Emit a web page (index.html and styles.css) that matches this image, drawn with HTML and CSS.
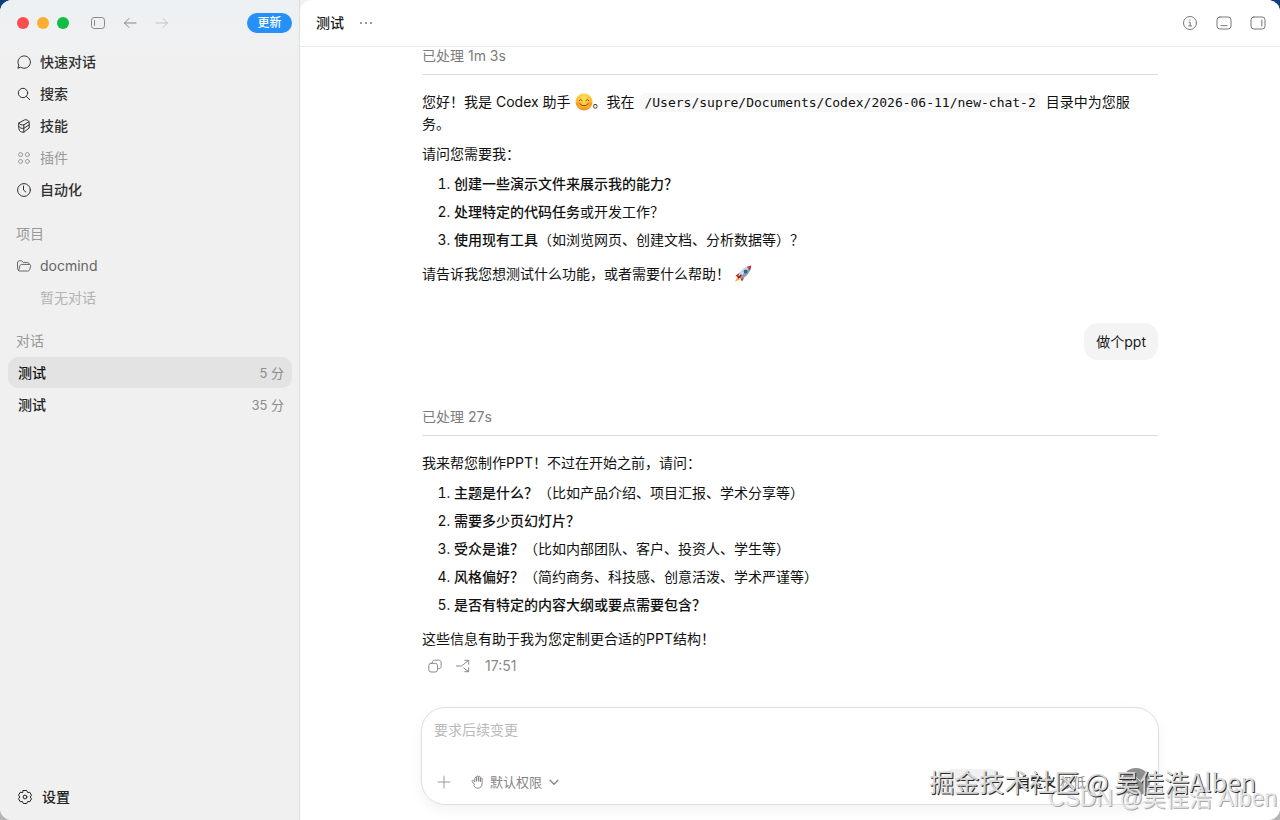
FILE: index.html
```html
<!DOCTYPE html>
<html lang="zh-CN">
<head>
<meta charset="utf-8">
<title>测试</title>
<link rel="stylesheet" href="styles.css">
</head>
<body>
<div class="window">
  <aside class="sidebar">
    <div class="titlebar">
      <span class="light red"></span><span class="light yellow"></span><span class="light green"></span>
      <button class="icon-btn" aria-label="切换侧栏"><svg class="icon" viewBox="0 0 16 16"><rect x="1.500" y="2.500" width="13" height="11" rx="2.800"/><path d="M4.500 5.500v5"/></svg></button>
      <button class="icon-btn" aria-label="后退"><svg class="icon" viewBox="0 0 16 16"><path d="M14 8H2.500M7 3.500L2.500 8 7 12.500"/></svg></button>
      <button class="icon-btn faint" aria-label="前进"><svg class="icon" viewBox="0 0 16 16"><path d="M2 8h11.500M9 3.500L13.500 8 9 12.500"/></svg></button>
      <button class="update">更新</button>
    </div>
    <nav class="nav">
      <a class="item" href="#"><svg class="icon" viewBox="0 0 16 16"><path d="M2 13.900l.8-2.700A6.200 6.200 0 1 1 4.900 13.400z"/></svg>快速对话</a>
      <a class="item" href="#"><svg class="icon" viewBox="0 0 16 16"><circle cx="7" cy="7" r="4.700"/><path d="M10.500 10.500l3.200 3.200"/></svg>搜索</a>
      <a class="item" href="#"><svg class="icon" viewBox="0 0 16 16"><path d="M2.900 5L8.500 1.900c2.700-.6 4.500.7 4.700 2.900v5.200L7.800 14.200c-2.800.2-4.700-1-4.900-3.200zM2.900 5c1 1.700 2.700 2.300 4.900 1.900l5.200-3.300M7.800 6.900v7.200M2.900 8.500c1 1.600 2.700 2.200 4.900 1.800l5.400-3.500"/></svg>技能</a>
      <a class="item muted" href="#"><svg class="icon" viewBox="0 0 16 16"><circle cx="4.600" cy="4.600" r="2"/><circle cx="11.400" cy="4.600" r="2"/><circle cx="4.600" cy="11.400" r="2"/><circle cx="11.400" cy="11.400" r="2"/></svg>插件</a>
      <a class="item" href="#"><svg class="icon" viewBox="0 0 16 16"><circle cx="8" cy="8" r="6.400"/><path d="M7.500 4v4l2.300 2"/></svg>自动化</a>
    </nav>
    <section class="group">
      <h2 class="group-title">项目</h2>
      <a class="item project" href="#"><svg class="icon" viewBox="0 0 16 16"><path d="M2.500 12.500C1.800 12 1.500 11 1.500 10V5c0-1.500.8-2.200 2-2.200h2l1.800 1.600h4c1.200 0 1.900.7 1.900 2M2.700 12.500L3.800 8c.3-1 .9-1.600 2-1.600h7.400c1.200 0 1.700.7 1.400 1.800l-.8 3c-.3 1.200-1 1.800-2.200 1.800H3.800c-.5 0-.9-.2-1.200-.5z"/></svg>docmind</a>
      <p class="empty">暂无对话</p>
    </section>
    <section class="group">
      <h2 class="group-title">对话</h2>
      <a class="chat active" href="#"><span>测试</span><time>5 分</time></a>
      <a class="chat" href="#"><span>测试</span><time>35 分</time></a>
    </section>
    <a class="item settings" href="#"><svg class="icon" viewBox="0 0 16 16"><path d="M6.300 1.500h3.400l.9 2 2.200-.2 1.700 2.900L13.200 8l1.300 1.800-1.700 2.900-2.200-.2-.9 2H6.300l-.9-2-2.200.2-1.700-2.900L2.800 8 1.500 6.200l1.700-2.900 2.200.2z"/><circle cx="8" cy="8" r="1.900"/></svg>设置</a>
  </aside>

  <main class="main">
    <header class="header">
      <h1 class="title">测试</h1>
      <button class="icon-btn" aria-label="更多"><svg class="icon dots" viewBox="0 0 16 16"><circle cx="3" cy="8" r="1"/><circle cx="8" cy="8" r="1"/><circle cx="13" cy="8" r="1"/></svg></button>
      <div class="tools">
        <button class="icon-btn" aria-label="信息"><svg class="icon" viewBox="0 0 16 16"><circle cx="8" cy="8" r="6.500"/><path d="M7 7.200h1.200v3.600M6.800 10.900h2.800M8 4.700v.5"/></svg></button>
        <button class="icon-btn" aria-label="底部面板"><svg class="icon" viewBox="0 0 16 16"><rect x="1" y="2" width="14" height="12" rx="2.800"/><path d="M5 10.700h6"/></svg></button>
        <button class="icon-btn" aria-label="右侧面板"><svg class="icon" viewBox="0 0 16 16"><rect x="1" y="2" width="14" height="12" rx="2.800"/><path d="M11.800 5v6"/></svg></button>
      </div>
    </header>

    <div class="thread">
      <article class="reply">
        <div class="status">已处理 1m 3s</div>
        <p>您好！我是 Codex 助手 <svg class="emoji" viewBox="0 0 18 18" role="img" aria-label="微笑"><defs><radialGradient id="face" cx=".5" cy=".3" r=".75"><stop offset="0" stop-color="#ffe45c"/><stop offset=".6" stop-color="#fdbd2c"/><stop offset="1" stop-color="#ee7b1a"/></radialGradient></defs><circle cx="9" cy="9" r="8.500" fill="url(#face)"/><circle cx="3.800" cy="10.500" r="2" fill="#f7803c" opacity=".6"/><circle cx="14.200" cy="10.500" r="2" fill="#f7803c" opacity=".6"/><path d="M4.200 7.600q1.500-2.600 3 0M10.800 7.600q1.500-2.600 3 0M5 11q4 4 8 0" fill="none" stroke="#8a4a12" stroke-width="1" stroke-linecap="round"/></svg>。我在 <code>/Users/supre/Documents/Codex/2026-06-11/new-chat-2</code> 目录中为您服<br>务。</p>
        <p>请问您需要我：</p>
        <ol>
          <li><strong>创建一些演示文件</strong><b class="semi">来展示我的能力？</b></li>
          <li><strong>处理特定的代码任务</strong>或开发工作？</li>
          <li><strong>使用现有工具</strong>（如浏览网页、创建文档、分析数据等）？</li>
        </ol>
        <p>请告诉我您想测试什么功能，或者需要什么帮助！ <svg class="emoji" viewBox="0 0 18 18" role="img" aria-label="火箭"><path d="M3.500 12L.8 16.800 6 14.500z" fill="#f9b52b"/><path d="M1.500 10.800l5.500-4 4 4-3 6-1.500-3.500L3.500 12z" fill="#d4252f"/><path d="M4.500 10.500Q8 2 17.300.5 16.500 9.500 8 14z" fill="#8d9dac"/><path d="M4.500 10.500Q8 2 17.300.5L6.500 12z" fill="#d0dae2"/><path d="M12.800 2Q15 1 17.300.5 17 3 16 5.300z" fill="#c8323b"/><circle cx="11.500" cy="6.500" r="1.900" fill="#27699d"/><path d="M4 13.300l3.500-3.500" stroke="#7b1620" stroke-width="1.400"/></svg></p>
      </article>

      <div class="bubble">做个ppt</div>

      <article class="reply">
        <div class="status">已处理 27s</div>
        <p>我来帮您制作PPT！不过在开始之前，请问：</p>
        <ol>
          <li><strong>主题是什么？</strong>（比如产品介绍、项目汇报、学术分享等）</li>
          <li><strong>需要多少页幻灯片？</strong></li>
          <li><strong>受众是谁？</strong>（比如内部团队、客户、投资人、学生等）</li>
          <li><strong>风格偏好？</strong>（简约商务、科技感、创意活泼、学术严谨等）</li>
          <li><strong>是否有特定的内容大纲或要点需要包含？</strong></li>
        </ol>
        <p>这些信息有助于我为您定制更合适的PPT结构！</p>
        <div class="actions">
          <button class="icon-btn" aria-label="复制"><svg class="icon" viewBox="0 0 16 16"><rect x="1.800" y="5.300" width="8.700" height="8.700" rx="2.300"/><path d="M5.300 5.200V4.500c0-1.400.8-2.300 2.200-2.300h4.300c1.400 0 2.300.9 2.300 2.300v4c0 1.400-.9 2.200-2.300 2.200h-1.200"/></svg></button>
          <button class="icon-btn" aria-label="分支"><svg class="icon" viewBox="0 0 16 16"><path d="M1.500 8h5L13.500 2.500M9.800 2.300h3.900v3.900M8.700 10l4.800 3.600M13.700 9.800v3.900H9.800"/></svg></button>
          <time>17:51</time>
        </div>
      </article>
    </div>

    <form class="composer">
      <textarea rows="1" aria-label="消息" placeholder="要求后续变更"></textarea>
      <div class="controls">
        <button type="button" class="icon-btn" aria-label="添加"><svg class="icon" viewBox="0 0 16 16"><path d="M8 2v12M2 8h12"/></svg></button>
        <button type="button" class="access"><svg class="icon hand" viewBox="0 0 14 14"><path d="M3 9L1.200 6.600C.5 5.500 1.800 4.700 2.600 5.600L3.800 7V3.200c0-1.200 1.700-1.200 1.700 0V6.300 2c0-1.300 1.900-1.300 1.900 0v4.300V2.200c0-1.300 1.900-1.300 1.900 0v4.600V3.800c0-1.200 1.800-1.200 1.800 0v4.500c0 3-1.700 4.900-4.300 4.900-1.900 0-2.900-.9-3.700-2.400z"/></svg>默认权限<svg class="icon chev" viewBox="0 0 16 16"><path d="M3.500 6L8 10.500 12.500 6"/></svg></button>
        <span class="chip"></span>
        <button type="button" class="model"><strong>自定义</strong> 极低</button>
        <button type="button" class="send" aria-label="发送"><svg class="icon" viewBox="0 0 16 16"><path d="M8 13V3M4 7l4-4 4 4"/></svg></button>
      </div>
    </form>
  </main>
  <div class="mark csdn">CSDN @吴佳浩 Alben</div>
  <div class="mark juejin">掘金技术社区 @ 吴佳浩Alben</div>
</div>
</body>
</html>
```
FILE: styles.css
```css
* { box-sizing: border-box; }
body {
  margin: 0;
  background: linear-gradient(#0d3f80 50%, #b5b5b5 50%);
  font: 14px/22px Inter, "Noto Sans CJK SC", sans-serif;
  color: #1a1a1a;
  text-spacing-trim: space-all;
}
button, textarea { font: inherit; color: inherit; border: 0; background: none; padding: 0; margin: 0; }
a { color: inherit; text-decoration: none; }
h1, h2, p, ol { margin: 0; font: inherit; }
.icon { width: 16px; height: 16px; flex: none; display: block; fill: none; stroke: currentColor; stroke-width: 1; stroke-linecap: round; stroke-linejoin: round; }
.icon-btn { display: flex; color: #777; }

.window { position: relative; display: flex; height: 100vh; border-radius: 12px; overflow: hidden; background: #f0f0f0; }
.sidebar { flex: 0 0 300px; display: flex; flex-direction: column; padding: 0 7px 7px 8px; border-right: 1px solid #dedede; background: linear-gradient(#edf1f3, #f0f0f0 60px); }
.titlebar { display: flex; align-items: center; height: 46px; padding-left: 9px; gap: 8px; }
.light { width: 12px; height: 12px; border-radius: 50%; }
.red { background: #fe4c4f; }
.yellow { background: #fcaf2f; }
.green { background: #10bd45; }
.titlebar .icon-btn { margin-left: 8px; color: #888; }
.titlebar .green + .icon-btn { margin-left: 13px; }
.titlebar .faint { color: #c4c4c4; }
.update { margin-left: auto; width: 45px; height: 20px; border-radius: 10px; background: #2490f8; color: #fff; font-size: 12px; line-height: 20px; font-weight: 500; }

.item { display: flex; align-items: center; height: 32px; padding-left: 8px; gap: 8px; font-weight: 500; color: #303030; }
.muted { color: #999; font-weight: 400; }
.project { color: #666; font-weight: 400; }
.group { margin-top: 12px; }
.group + .group { margin-top: 11px; }
.group-title { padding-left: 8px; line-height: 32px; color: #999; }
.empty { padding-left: 32px; line-height: 32px; color: #b3b3b3; }
.chat { display: flex; justify-content: space-between; align-items: center; height: 31px; margin-bottom: 1px; padding: 0 8px 0 10px; border-radius: 10px; font-weight: 500; color: #222; }
.chat time { color: #8c8c8c; font-size: 13px; font-weight: 400; }
.active { background: #e3e3e3; color: #111; }
.settings { margin-top: auto; padding-left: 9px; gap: 9px; color: #222; }

.main { flex: 1; min-width: 0; display: flex; flex-direction: column; background: #fff; border-top-left-radius: 12px; }
.header { display: flex; align-items: center; height: 47px; flex: none; padding: 0 14px 0 16px; border-bottom: 1px solid #e9e9e9; }
.title { font-weight: 500; }
.header .icon-btn { margin-left: 14px; color: #777; }
.header .dots { fill: currentColor; stroke: none; }
.tools { display: flex; gap: 4px; margin-left: auto; }

.thread { flex: 1; min-height: 0; overflow: hidden; display: flex; flex-direction: column; width: 100%; max-width: 736px; margin: 0 auto; }
.status { padding-bottom: 9px; margin-bottom: 16px; border-bottom: 1px solid #dcdcdc; line-height: 18px; color: #7c7c7c; }
.reply p + p, .reply ol { margin-top: 8px; }
.reply ol { padding-left: 32px; }
.reply li + li { margin-top: 6px; }
.reply ol + p { margin-top: 12px; }
.reply p, .reply li { color: #111; }
strong, .semi { font-weight: 500; }
code { margin: 0 2px; padding: 2px 4px; border-radius: 6px; background: #f8f8f8; font: 13px/18px "DejaVu Sans Mono", monospace; }
.emoji { display: inline-block; width: 18px; height: 18px; vertical-align: -4px; }
.bubble { align-self: flex-end; margin: 38px 0 48px; padding: 8px 12px 7px; border-radius: 14px; background: #f4f4f4; }
.actions { display: flex; align-items: center; gap: 12px; margin-top: 5px; padding-left: 5px; color: #8a8a8a; }
.actions .icon-btn { color: #8a8a8a; }
.actions time { margin-left: 2px; }

.composer { flex: none; display: flex; flex-direction: column; justify-content: space-between; width: calc(100% - 32px); max-width: 738px; height: 98px; margin: 0 auto 15px; padding: 11px 8px 10px 12px; border: 1px solid #dedede; border-radius: 24px; box-shadow: 0 5px 14px rgba(0, 0, 0, .05); }
.composer textarea { display: block; width: 100%; height: 22px; outline: 0; resize: none; overflow: hidden; }
.composer textarea::placeholder { color: #b9b9b9; }
.controls { display: flex; align-items: center; height: 24px; }
.controls .icon-btn { margin-left: 2px; color: #999; }
.access { display: flex; align-items: center; gap: 5px; margin-left: 19px; color: #858585; font-size: 13px; }
.access .hand { width: 14px; height: 14px; }
.access .chev { width: 14px; height: 14px; stroke-width: 1.5; }
.chip { width: 62px; height: 26px; margin-left: auto; border-radius: 13px; background: #f1f1f1; }
.model { margin-left: 14px; color: #888; font-size: 13px; }
.model strong { color: #222; }
.send { display: flex; align-items: center; justify-content: center; width: 28px; height: 28px; margin-left: 36px; border-radius: 50%; background: #8f8f8f; color: #ddd; }

.mark { position: absolute; white-space: nowrap; pointer-events: none; }
.juejin { right: 24px; bottom: 21px; font: 25px/36px "Noto Sans CJK SC", sans-serif; color: #d8d8d8; text-shadow: 1px 1px 0 #2a2a2a; }
.csdn { right: 3px; bottom: 6px; font: 23px/32px "Liberation Sans", "Noto Sans CJK SC", sans-serif; color: #e6e6e6; text-shadow: 1px 1px 0 #a8a8a8; }
```
